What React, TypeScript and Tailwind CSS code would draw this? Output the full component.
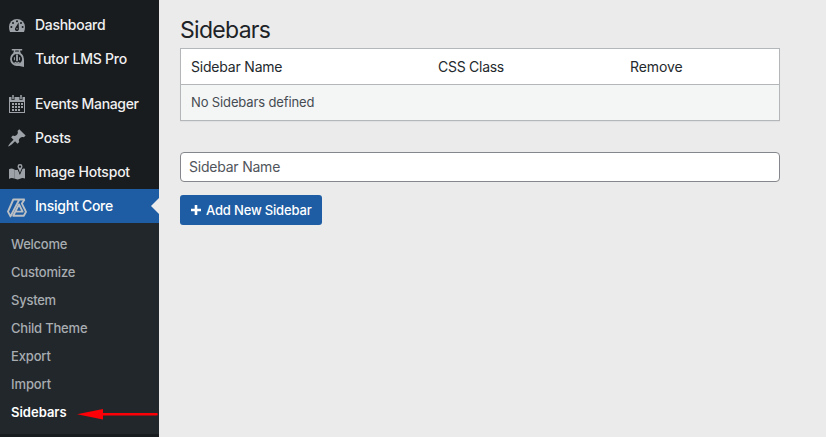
import type { ReactNode } from "react";

function DashboardIcon() {
  return (
    <svg width="16" height="13" viewBox="0 0 16 13">
      <path fill="#9ca2a7" d="M8 0a8 8 0 0 0-8 8c0 1.8.3 3.5 1 5h14c.7-1.5 1-3.2 1-5a8 8 0 0 0-8-8Z" />
      <g fill="#191c20">
        <circle cx="8" cy="2.2" r="1" />
        <circle cx="4" cy="4" r="1" />
        <circle cx="12" cy="4" r="1" />
        <circle cx="2.4" cy="8" r="1" />
        <circle cx="13.6" cy="8" r="1" />
        <path d="M9.6 3.6 9.9 9.8a2 2 0 1 1-3.5-1Z" />
      </g>
      <circle cx="8" cy="9.8" r=".7" fill="#9ca2a7" />
    </svg>
  );
}

function TutorIcon() {
  return (
    <svg width="14" height="18" viewBox="0 0 14 18" className="-mt-0.5" fill="none" stroke="#9ca2a7">
      <path d="M1.8 .8h10.4M4.5 1v3M9.5 1v3" strokeWidth="1.5" />
      <path d="M3.5 4.2Q7 2.5 10.5 4.2" strokeWidth="1.5" />
      <circle cx="7" cy="10" r="6" strokeWidth="1.8" />
      <path d="M14 10v8L6 16.2Q12 15 13 11Z" fill="#9ca2a7" stroke="none" />
      <path d="M7 5.5v6.8" strokeWidth="1.8" />
      <path d="M4.4 8.2v3M9.6 8.2v3" strokeWidth="1" />
      <path d="M4.6 13.4Q7 15 9.4 13.4" strokeWidth="1.6" />
    </svg>
  );
}

function CalendarIcon() {
  return (
    <svg width="16" height="18" viewBox="0 0 16 18">
      <path
        fill="#9ca2a7"
        fillRule="evenodd"
        d="M0 2h2.5v3h3V2h5v3h3V2H16v16H0ZM1 7v10h14V7Z"
      />
      <path d="M4 0v4.2M12 0v4.2" stroke="#9ca2a7" strokeWidth="1.5" />
      <path
        fill="#9ca2a7"
        d="M6 8h2v2H6zM9 8h2v2H9zM12 8h2v2h-2zM3 11h2v2H3zM6 11h2v2H6zM9 11h2v2H9zM12 11h2v2h-2zM3 14h2v2H3zM6 14h2v2H6zM9 14h2v2H9zM3 8h2v2H3z"
      />
    </svg>
  );
}

function PinIcon() {
  return (
    <svg width="20" height="20" viewBox="0 0 20 20">
      <path
        fill="#9ca2a7"
        d="M10.44 3.02 12.26 1.2l6.36 6.35-1.83 1.82c-1.05-.68-2.48-.57-3.41.36l-.75.75c-.92.93-1.04 2.35-.35 3.41l-1.83 1.82-2.41-2.41-2.8 2.79c-.42.42-3.38 2.71-3.8 2.29s1.86-3.39 2.28-3.81l2.79-2.79L4.1 9.36l1.83-1.82c1.05.69 2.48.57 3.4-.36l.75-.75c.93-.92 1.05-2.35.36-3.41Z"
      />
    </svg>
  );
}

function MapIcon() {
  return (
    <svg width="16" height="16" viewBox="0 0 16 16">
      <path fill="#9ca2a7" d="M0 5.2Q2.5 3.6 5.3 5.4v9.2Q2.5 13.2 0 15Z" />
      <path fill="#9ca2a7" d="M5.3 5.4Q7.6 6.7 9 5.6L10.8 10l2-4.6Q14.5 4 16 4.8v9.8q-2.4-1.3-5 .1t-5.7-.1Z" />
      <path fill="#191c20" d="m8.3 4.6 2.6 6.5 2.7-6.5-.7-.3-2 2.7-2-2.7Z" />
      <path fill="#9ca2a7" fillRule="evenodd" d="M11 0a2.5 2.5 0 0 1 2.5 2.6C13.5 4.3 11.8 5.6 11 9 10.2 5.6 8.5 4.3 8.5 2.6A2.5 2.5 0 0 1 11 0Zm0 1.4a1.2 1.2 0 1 0 0 2.4 1.2 1.2 0 0 0 0-2.4Z" />
    </svg>
  );
}

function InsightIcon() {
  return (
    <svg width="20" height="20" viewBox="0 0 20 20" className="mt-[3px]" fill="none" stroke="#bcc0c4" strokeWidth="1.9" strokeLinejoin="round">
      <path d="M17.8 1.5H6.3L1 13.6l2.5 4.8L12.2 1.8" />
      <path d="M17.5 1.5 14.9 5.6l4.1 8.2-2.2 3.9H6.2L12 6.4l3.6 7.2H8.5" />
    </svg>
  );
}

type ItemProps = { icon: ReactNode; label: string; tracking: string; active?: boolean };

function MenuItem({ icon, label, tracking, active = false }: ItemProps) {
  return (
    <a
      className={`relative flex h-[34px] items-center text-sm font-[450] ${active ? "bg-[#1e5da3] text-white" : "text-[#f0f0f1]"}`}
    >
      <span className="flex w-[35px] shrink-0 items-center justify-center pr-px">{icon}</span>
      <span className={`whitespace-nowrap ${tracking}`}>{label}</span>
      {active && (
        <svg className="absolute top-[9px] right-0" width="8" height="16" viewBox="0 0 8 16">
          <path d="M8 0v16L0 8Z" fill="#ebebeb" />
        </svg>
      )}
    </a>
  );
}

const submenu = [
  { label: "Welcome", style: "tracking-[-0.25px]" },
  { label: "Customize", style: "tracking-[-0.2px]" },
  { label: "System", style: "tracking-[-0.25px]" },
  { label: "Child Theme", style: "tracking-[-0.2px]" },
  { label: "Export", style: "tracking-[-0.15px]" },
  { label: "Import", style: "tracking-[-0.1px]" },
];

export default function App() {
  return (
    <div className="flex h-[437px] w-[826px] overflow-hidden bg-[#ebebeb] font-['Inter','Liberation_Sans',sans-serif]">
      <aside className="w-[159px] shrink-0 bg-[#181c1f] pt-2">
        <MenuItem icon={<DashboardIcon />} label="Dashboard" tracking="tracking-[-0.3px]" />
        <MenuItem icon={<TutorIcon />} label="Tutor LMS Pro" tracking="tracking-[-0.22px]" />
        <div className="h-[11px]" />
        <MenuItem icon={<CalendarIcon />} label="Events Manager" tracking="tracking-[-0.32px]" />
        <MenuItem icon={<PinIcon />} label="Posts" tracking="tracking-[-0.25px]" />
        <MenuItem icon={<MapIcon />} label="Image Hotspot" tracking="tracking-[-0.22px]" />
        <MenuItem icon={<InsightIcon />} label="Insight Core" tracking="tracking-[-0.25px]" active />
        <nav className="bg-[#22272b] pt-2 pb-[7px] text-[13px] font-[450] text-[#a8adb2]">
          {submenu.map((item) => (
            <a key={item.label} className={`flex h-7 items-center pl-[11px] ${item.style}`}>
              {item.label}
            </a>
          ))}
          <a className="flex h-7 items-center pl-[11px] font-semibold text-white">
            <span className="w-[66px]">Sidebars</span>
            <svg width="81" height="12" viewBox="0 0 81 12" className="mt-[2px]">
              <path d="M0 6.2 26 .9V4.9H79.5a1.3 1.3 0 0 1 0 2.7H26v4Z" fill="#fb0007" />
            </svg>
          </a>
        </nav>
      </aside>

      <main className="w-[621px] pt-[14px] pl-[21px]">
        <h1 className="h-[34px] text-[23px] leading-[32px] tracking-[-0.7px] text-[#1d2327]">Sidebars</h1>
        <div className="h-[73px] border border-[#b4b7b9] bg-white shadow-[0_1px_1px_rgba(0,0,0,0.04)]">
          <div className="grid h-9 grid-cols-[247px_192px_1fr] items-center border-b border-[#b4b7b9] pl-[10px] text-sm tracking-[-0.2px] text-[#24292d]">
            <span>Sidebar Name</span>
            <span className="tracking-[-0.27px]">CSS Class</span>
            <span className="tracking-[-0.1px]">Remove</span>
          </div>
          <div className="flex h-[35px] items-center bg-[#f4f6f5] pl-[10px] text-[13px] tracking-[-0.13px] text-[#454b52]">
            <span>No Sidebars defined</span>
          </div>
        </div>
        <div className="mt-[31px] flex h-[30px] items-center rounded border border-[#84878b] bg-white pl-2 text-sm tracking-[-0.22px] text-[#50555b]">
          <span>Sidebar Name</span>
        </div>
        <button className="mt-[13px] flex h-[30px] w-[142px] items-center rounded-[3px] bg-[#1e5da3] pl-[11px] text-[13px] font-[450] tracking-[-0.17px] text-white">
          <svg width="10" height="10" viewBox="0 0 10 10" className="mr-[5px]">
            <path d="M5 0v10M0 5h10" stroke="white" strokeWidth="2.6" />
          </svg>
          <span className="mt-px whitespace-nowrap">Add New Sidebar</span>
        </button>
      </main>
    </div>
  );
}
